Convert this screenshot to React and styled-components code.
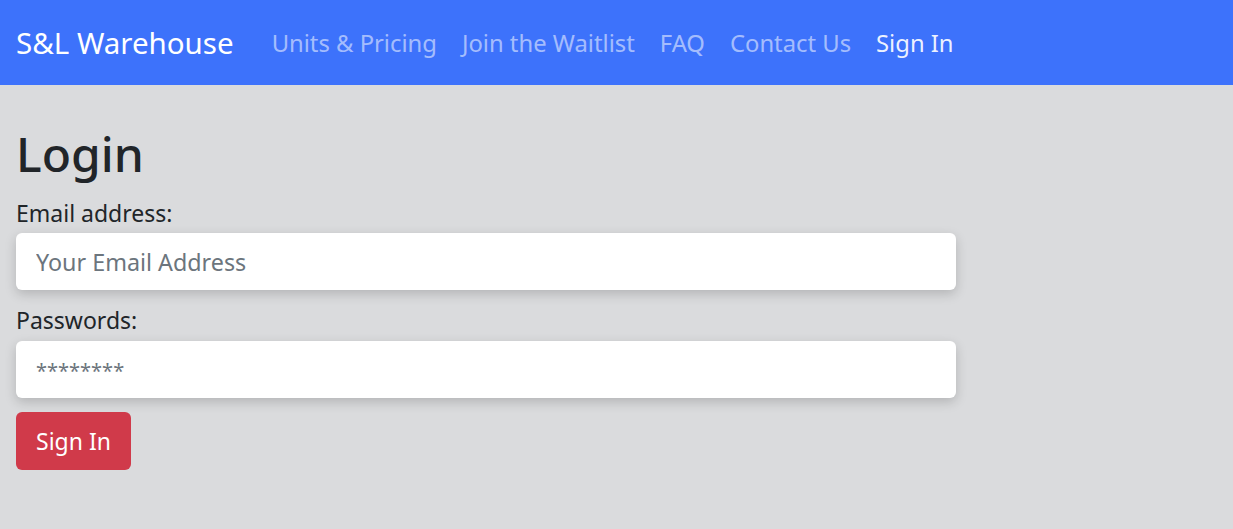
import React from 'react';
import styled, { createGlobalStyle } from 'styled-components';

const GlobalStyle = createGlobalStyle`
    body {
        margin: 0;
        background: #dadbdd;
        font-family: 'Noto Sans', 'Open Sans', sans-serif;
        color: #212529;
    }
`;

const Navbar = styled.nav`
    height: 85px;
    background: #3d72fb;
    display: flex;
    align-items: center;
    padding: 0 16px;
    box-sizing: border-box;
`;

const Brand = styled.a`
    color: #fff;
    font-size: 29.5px;
    margin-right: 38px;
    text-decoration: none;
`;

const NavLinks = styled.div`
    display: flex;
    gap: 25px;
`;

const NavLink = styled.a`
    font-size: 23.8px;
    text-decoration: none;
    color: ${props => (props.active ? 'rgba(255, 255, 255, 0.92)' : 'rgba(255, 255, 255, 0.55)')};
`;

const Main = styled.main`
    padding: 40px 16px 24px;
    width: 940px;
`;

const Heading = styled.h1`
    font-size: 48px;
    font-weight: 500;
    margin: 0 0 13px;
    line-height: 1.2;
`;

const Label = styled.label`
    display: block;
    font-size: 23px;
    line-height: 1.5;
    margin-bottom: 3px;
`;

const Field = styled.div`
    margin-bottom: 13px;
`;

const Input = styled.input`
    display: block;
    width: 100%;
    height: 57px;
    box-sizing: border-box;
    border: none;
    border-radius: 6px;
    padding: 0 20px;
    font-family: inherit;
    font-size: 23.3px;
    background: #fff;
    box-shadow: 0 4px 12px rgba(0, 0, 0, 0.18);
    outline: none;

    &::placeholder {
        color: #6c757d;
        font-size: ${props => (props.type === 'password' ? '20px' : 'inherit')};
    }
`;

const Button = styled.button`
    height: 58px;
    margin-top: 1px;
    padding: 0 20px;
    border: none;
    border-radius: 6px;
    background: #d03a4a;
    color: #fff;
    font-family: inherit;
    font-size: 23px;
    cursor: pointer;
`;

export default function App() {
    return (
        <>
            <GlobalStyle />
            <Navbar>
                <Brand href="#">S&amp;L Warehouse</Brand>
                <NavLinks>
                    <NavLink href="#">Units &amp; Pricing</NavLink>
                    <NavLink href="#">Join the Waitlist</NavLink>
                    <NavLink href="#">FAQ</NavLink>
                    <NavLink href="#">Contact Us</NavLink>
                    <NavLink href="#" active>Sign In</NavLink>
                </NavLinks>
            </Navbar>
            <Main>
                <Heading>Login</Heading>
                <Field>
                    <Label>Email address:</Label>
                    <Input type="email" placeholder="Your Email Address" />
                </Field>
                <Field>
                    <Label>Passwords:</Label>
                    <Input type="password" placeholder="********" />
                </Field>
                <Button>Sign In</Button>
            </Main>
        </>
    );
}
